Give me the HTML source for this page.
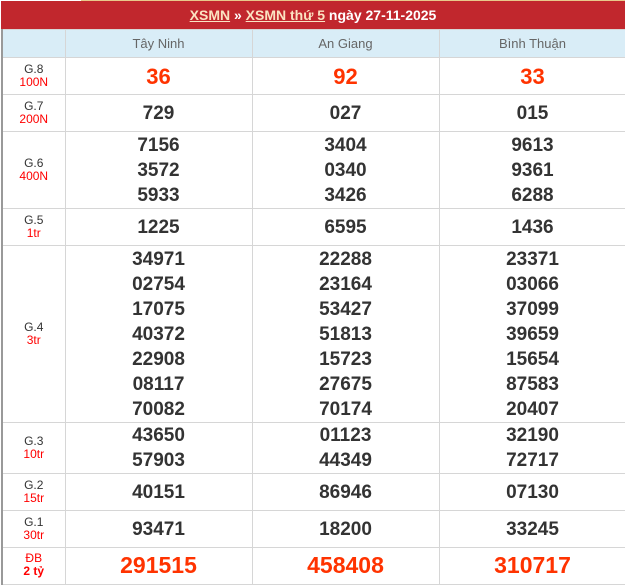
<!DOCTYPE html>
<html><head><meta charset="utf-8"><style>
*{margin:0;padding:0;box-sizing:border-box}
body{width:625px;height:577px;overflow:hidden;background:#fff;font-family:"Liberation Sans",Arial,sans-serif;position:relative}
.top{position:absolute;left:81px;top:0;width:544px;height:1px;background:#e8c98a}
.bar{position:absolute;left:1px;top:1px;width:624px;height:28px;background:#c1272d;color:#fff;font-weight:bold;font-size:14px;text-align:center;line-height:29px}
.bar a{color:#fbe3c2;text-decoration:underline}
table{position:absolute;left:1px;top:29px;width:624px;border-collapse:collapse;table-layout:fixed}
td{border:1px solid #d6d6d6;text-align:center;vertical-align:middle;padding:0}
tr>td:first-child{border-left:2px solid #999}
.h td{background:#d9edf7;color:#666;font-size:13px;height:28px}
.l{font-size:12px;color:#333;line-height:13px}
.l span{color:#f00;display:block}
.n{font-size:19px;font-weight:bold;color:#333;line-height:25px}
.r{color:#ff3300;font-size:22px}
.db{color:#ff3300;font-size:23px}
</style></head><body>
<div class="top"></div>
<div class="bar"><a>XSMN</a> » <a>XSMN thứ 5</a> ngày 27-11-2025</div>
<table>
<colgroup><col style="width:63px"><col style="width:187px"><col style="width:187px"><col style="width:187px"></colgroup>
<tr class="h"><td></td><td>Tây Ninh</td><td>An Giang</td><td>Bình Thuận</td></tr>
<tr style="height:37px"><td class="l">G.8<span>100N</span></td><td class="n r">36</td><td class="n r">92</td><td class="n r">33</td></tr>
<tr style="height:37px"><td class="l">G.7<span>200N</span></td><td class="n">729</td><td class="n">027</td><td class="n">015</td></tr>
<tr style="height:77px"><td class="l">G.6<span>400N</span></td><td class="n">7156<br>3572<br>5933</td><td class="n">3404<br>0340<br>3426</td><td class="n">9613<br>9361<br>6288</td></tr>
<tr style="height:37px"><td class="l">G.5<span>1tr</span></td><td class="n">1225</td><td class="n">6595</td><td class="n">1436</td></tr>
<tr style="height:177px"><td class="l">G.4<span>3tr</span></td><td class="n">34971<br>02754<br>17075<br>40372<br>22908<br>08117<br>70082</td><td class="n">22288<br>23164<br>53427<br>51813<br>15723<br>27675<br>70174</td><td class="n">23371<br>03066<br>37099<br>39659<br>15654<br>87583<br>20407</td></tr>
<tr style="height:51px"><td class="l">G.3<span>10tr</span></td><td class="n">43650<br>57903</td><td class="n">01123<br>44349</td><td class="n">32190<br>72717</td></tr>
<tr style="height:37px"><td class="l">G.2<span>15tr</span></td><td class="n">40151</td><td class="n">86946</td><td class="n">07130</td></tr>
<tr style="height:37px"><td class="l">G.1<span>30tr</span></td><td class="n">93471</td><td class="n">18200</td><td class="n">33245</td></tr>
<tr style="height:37px"><td class="l" style="color:#f00;vertical-align:top;padding-top:4px">ĐB<span style="font-weight:bold">2 tỷ</span></td><td class="n db" style="vertical-align:top;padding-top:5px">291515</td><td class="n db" style="vertical-align:top;padding-top:5px">458408</td><td class="n db" style="vertical-align:top;padding-top:5px">310717</td></tr>
</table>
</body></html>
